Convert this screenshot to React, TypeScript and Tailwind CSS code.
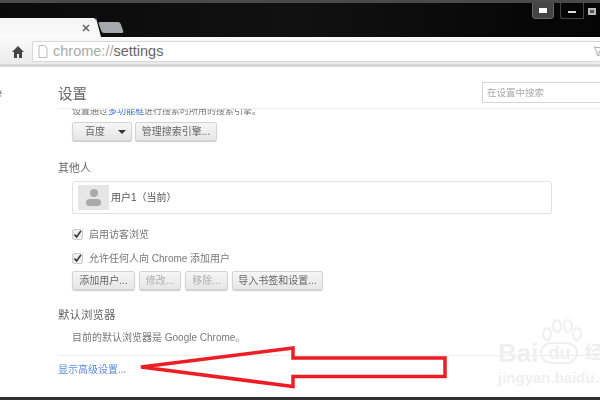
import React from "react";

const cjk = { fontFamily: '"Liberation Sans","Noto Sans CJK SC",sans-serif' };

function Btn({ w, children, off, ml }: { w: string; children: React.ReactNode; off?: boolean; ml?: string }) {
  return (
    <div className={`${w} ${ml ?? ""} h-[19px] flex items-center justify-center rounded-[2px] border border-[#d4d4d4] bg-gradient-to-b from-[#f6f6f6] to-[#e6e6e6] text-[10px] ${off ? "text-[#b0b0b0]" : "text-[#666]"} shadow-[0_1px_1px_#ccc]`}>
      {children}
    </div>
  );
}

function Check({ children }: { children: React.ReactNode }) {
  return (
    <div className="flex items-center gap-[6px] h-[12px] text-[10px] text-[#777]">
      <div className="w-[11px] h-[11px] rounded-[2px] border border-[#ccc] bg-[#eee] flex items-center justify-center">
        <svg width="10" height="10" viewBox="0 0 10 10"><path d="M1.500 5.500L4 8.200L8.800 1.500" fill="none" stroke="#333" strokeWidth="1.800" /></svg>
      </div>
      <span>{children}</span>
    </div>
  );
}

export default function App() {
  return (
    <div className="relative w-[600px] h-[400px] overflow-hidden bg-white flex flex-col" style={cjk}>
      <div className="flex flex-col flex-1 blur-[0.6px]">
        {/* title bar */}
        <div className="h-[37px] shrink-0 bg-gradient-to-r from-[#0a0a0a] via-[#111] to-[#050505] border-t-[3px] border-[#4a4a4a] flex items-end relative">
          <div className="w-[96px] h-[19px] bg-gradient-to-b from-[#f4f4f4] to-[#fafafa] rounded-tr-[3px] flex items-center justify-end pr-[6px]">
            <svg width="8" height="8" viewBox="0 0 8 8"><path d="M1 1L7 7M7 1L1 7" stroke="#666" strokeWidth="1.600" /></svg>
          </div>
          <div className="w-0 h-0 border-l-[5px] border-l-[#f6f6f6] border-t-[19px] border-t-transparent" />
          <div className="w-[22px] h-[11px] ml-[-1px] mb-[4px] bg-[#a5a8ad] rounded-[2px] skew-x-[20deg]" />
          <div className="ml-auto self-start flex items-start">
            <div className="w-[22px] h-[16px] rounded-b-[4px] bg-[#444] border border-t-0 border-[#666] flex items-center justify-center mr-[6px]">
              <div className="w-[8px] h-[5px] bg-white" />
            </div>
            <div className="w-[23px] h-[16px] border-l border-b border-[#444] rounded-bl-[3px] flex items-center justify-center">
              <div className="w-[8px] h-[2px] mt-[3px] bg-[#ddd]" />
            </div>
            <div className="w-[17px] h-[16px] border-l border-[#444] flex items-center justify-center">
              <div className="w-[8px] h-[7px] border-2 border-[#bbb] bg-[#555]" />
            </div>
          </div>
        </div>

        {/* toolbar */}
        <div className="h-[30px] shrink-0 pt-[2px] bg-gradient-to-b from-[#fafafa] to-[#ececec] border-b-[3px] border-[#d8d8d8] flex items-center">
          <svg className="ml-[11px]" width="14" height="14" viewBox="0 0 14 14"><path d="M7 1L1 7h2v6h3V9h2v4h3V7h2L7 1z" fill="#444" /></svg>
          <div className="ml-[7px] flex-1 h-[21px] bg-white border border-r-0 border-[#d8d8d8] rounded-l-[2px] flex items-center pl-[5px]">
            <svg width="10" height="13" viewBox="0 0 10 13"><path d="M1 .5h5.500L9 3v9.500H1z" fill="#fff" stroke="#bbb" /></svg>
            <span className="ml-[5px] text-[14.5px] text-[#aaa]">chrome://<span className="text-[#666]">settings</span></span>
            <svg className="ml-auto mr-[-3px]" width="10" height="12" viewBox="0 0 10 12"><path d="M1 1l8 1-3 4v4L4 9V6z" fill="none" stroke="#aaa" /></svg>
          </div>
        </div>

        {/* page */}
        <div className="flex flex-1 min-h-0">
          <div className="w-[58px] shrink-0 text-[13px] text-[#888] pt-[16px] relative overflow-hidden">
            <span className="block ml-[-5px]">e</span>
          </div>
          <div className="flex-1 flex flex-col min-w-0">
            <div className="h-[41px] flex items-start justify-between">
              <span className="mt-[17px] text-[14.5px] leading-[20px] text-[#666]">设置</span>
              <div className="mt-[15px] w-[118px] h-[21px] pt-[2px] border border-r-0 border-[#d5d5d5] flex items-center pl-[4px] text-[9.5px] text-[#aaa]">在设置中搜索</div>
            </div>
            <div className="border-t border-[#eee] h-[8px] overflow-hidden pl-[14px] flex items-end">
              <span className="text-[9px] leading-[12px] mb-[-1px] text-[#777] whitespace-nowrap">设置通过<span className="text-[#3b6fd4]">多功能框</span>进行搜索时所用的搜索引擎。</span>
            </div>
            <div className="pl-[14px] mt-[6px] flex">
              <Btn w="w-[60px]">
                <span className="flex-1 pl-[12px]">百度</span>
                <span className="mr-[5px] w-0 h-0 border-x-[4px] border-x-transparent border-t-[4px] border-t-[#333]" />
              </Btn>
              <Btn w="w-[82px]" ml="ml-[3px]">管理搜索引擎...</Btn>
            </div>
            <div className="mt-[19px] text-[11px] leading-[16px] text-[#666]">其他人</div>
            <div className="ml-[14px] mt-[5px] w-[480px] h-[33px] border border-[#e2e2e2] rounded-[2px] flex items-center pl-[5px]">
              <div className="w-[31px] h-[25px] bg-[#e6e6e6] flex flex-col items-center justify-center">
                <div className="w-[8px] h-[8px] rounded-full bg-[#aaa]" />
                <div className="w-[15px] h-[7px] mt-[2px] rounded-full bg-[#aaa]" />
              </div>
              <span className="ml-[2px] text-[10px] text-[#555]">用户1（当前）</span>
            </div>
            <div className="pl-[14px] mt-[14px]"><Check>启用访客浏览</Check></div>
            <div className="pl-[14px] mt-[12px]"><Check>允许任何人向 Chrome 添加用户</Check></div>
            <div className="pl-[14px] mt-[7px] flex">
              <Btn w="w-[63px]">添加用户...</Btn>
              <Btn w="w-[42px]" ml="ml-[4px]" off>修改...</Btn>
              <Btn w="w-[43px]" ml="ml-[4px]" off>移除...</Btn>
              <Btn w="w-[91px]" ml="ml-[4px]">导入书签和设置...</Btn>
            </div>
            <div className="mt-[17px] text-[11.5px] leading-[16px] text-[#666]">默认浏览器</div>
            <div className="pl-[14px] mt-[8px] text-[10px] leading-[14px] text-[#777]">目前的默认浏览器是 Google Chrome。</div>
            <div className="mt-[10px] border-t border-[#eee] pt-[7px] text-[10px] leading-[14px] text-[#5a88e0]">显示高级设置...</div>
          </div>
        </div>
        <div className="h-[3px] shrink-0 bg-[#333]" />
      </div>

      {/* watermark */}
      <div className="absolute left-[498px] top-[340px] text-[#efefef] font-bold leading-none whitespace-nowrap">
        <div className="flex items-center text-[26px]">
          <span>Bai</span>
          <span className="ml-[2px] text-[18px] rounded-full border-2 border-[#efefef] px-[6px]">du</span>
          <span className="ml-[6px] text-[18px]">经验</span>
        </div>
        <div className="mt-[4px] text-[15px]">jingyan.baidu.com</div>
      </div>
      <svg className="absolute left-[535px] top-[318px]" width="52" height="32" viewBox="0 0 52 32" fill="none" stroke="#efefef" strokeWidth="2">
        <ellipse cx="12" cy="16" rx="4" ry="6" /><ellipse cx="22" cy="8" rx="4" ry="6" /><ellipse cx="33" cy="8" rx="4" ry="6" /><ellipse cx="42" cy="16" rx="4" ry="6" />
      </svg>

      {/* annotation arrow */}
      <svg className="absolute left-0 top-0 pointer-events-none blur-[0.3px]" width="600" height="400" viewBox="0 0 600 400" fill="none">
        <path d="M141 367L293 348V358H445V376.500H293V386.500Z" stroke="#ee1c25" strokeWidth="3.500" strokeLinejoin="miter" />
      </svg>
    </div>
  );
}
